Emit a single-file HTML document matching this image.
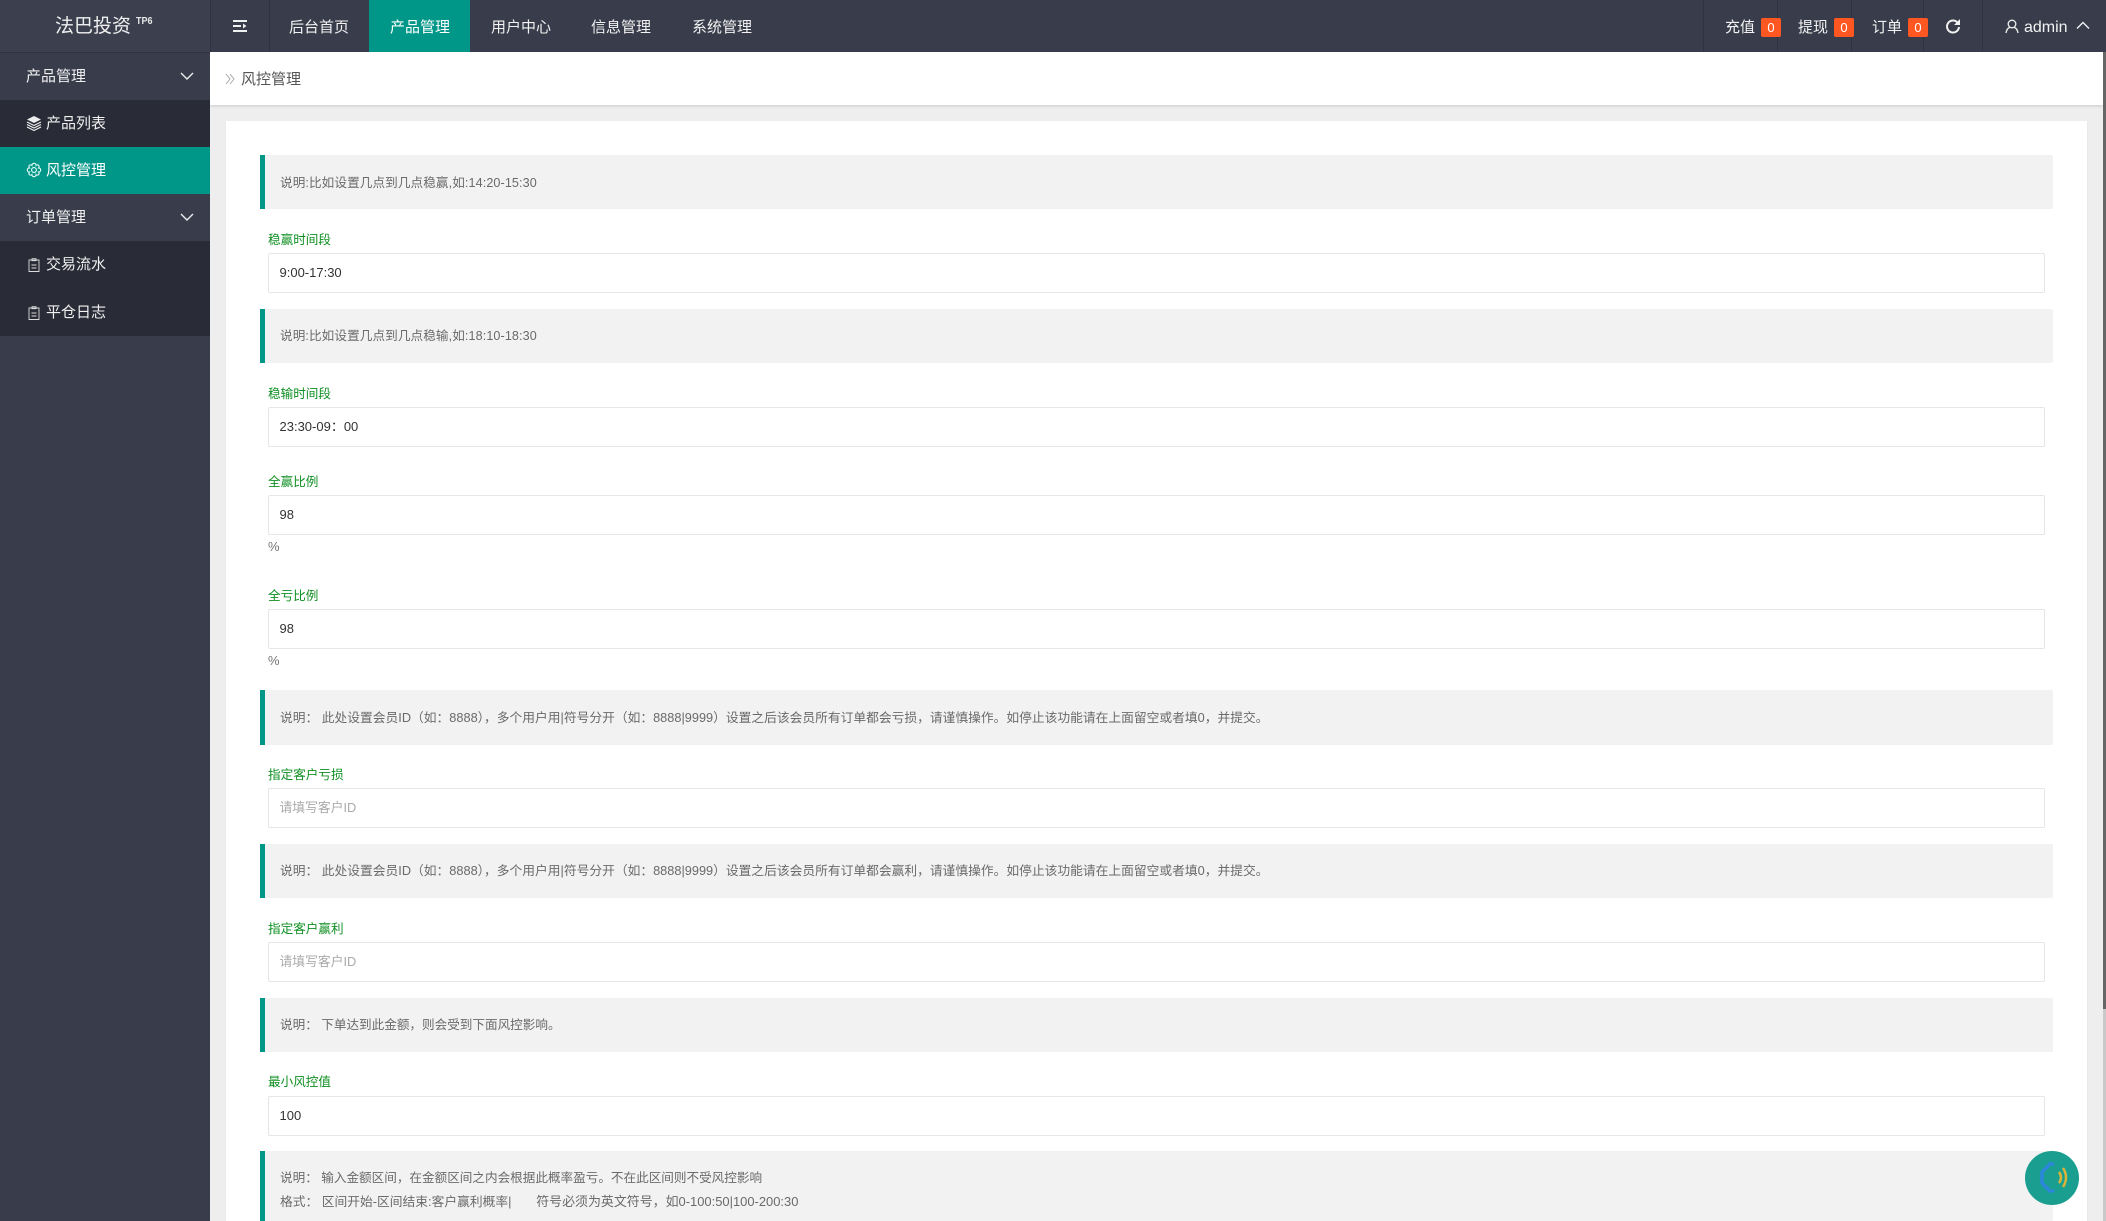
<!DOCTYPE html>
<html lang="zh-CN">
<head>
<meta charset="utf-8">
<title>风控管理</title>
<style>
*{box-sizing:border-box;margin:0;padding:0}
html,body{width:2106px;height:1221px;overflow:hidden;background:#eeeeee;font-family:"Liberation Sans","Noto Sans CJK SC",sans-serif;-webkit-font-smoothing:antialiased}
.a{position:absolute;white-space:pre}
#hd{left:0;top:0;width:2106px;height:52px;background:#393d4b}
.sep{position:absolute;top:0;width:1px;height:52px;background:#2f3340}
.nav{position:absolute;top:2px;height:50px;line-height:52px;color:#f2f2f2;font-size:15px}
.tab{position:absolute;left:369px;top:0;width:101px;height:52px;background:#009688}
.bd{position:absolute;top:18px;width:20px;height:19px;background:#ff5722;border-radius:2px;color:#fff;font-size:13px;line-height:19px;text-align:center}
#sb{left:0;top:52px;width:210px;height:1169px;background:#393d4b}
.si{position:absolute;left:0;width:210px;color:#f0f0f0;font-size:15px}
.st{position:absolute;left:26px;top:0;line-height:inherit}
.q{position:absolute;left:260px;width:1793px;background:#f2f2f2;border-left:5px solid #009688;border-radius:0 2px 2px 0;color:#6a6a6a;font-size:12.6px;padding-left:15px;white-space:pre}
.l{position:absolute;left:268px;height:18px;line-height:19px;font-size:12.6px;color:#0f8f22;white-space:pre}
.i{position:absolute;left:268px;width:1777px;height:40px;line-height:38px;border:1px solid #e6e6e6;background:#fff;border-radius:2px;padding-left:10.5px;font-size:13px;color:#333;white-space:pre}
.ph{color:#aaa;font-size:12.8px}
.p{position:absolute;left:268px;height:16px;line-height:16px;font-size:13px;color:#777}
svg{position:absolute;display:block;overflow:visible}
</style>
</head>
<body>
<div class="a" style="left:226px;top:52px;width:1877px;height:1169px;background:#eeeeee"></div>

<!-- breadcrumb -->
<div class="a" style="left:210px;top:52px;width:1893px;height:53px;background:#fff;box-shadow:0 1px 3px rgba(0,0,0,.15)"></div>
<svg style="left:225px;top:73px" width="11" height="12" viewBox="0 0 11 12" fill="none" stroke="#a8a8a8" stroke-width="1"><path d="M1 1l4 5-4 5M5 1l4 5-4 5"/></svg>
<div class="a" style="left:241px;top:70px;line-height:20px;font-size:15px;color:#555">风控管理</div>

<!-- card -->
<div class="a" style="left:226px;top:121px;width:1861px;height:1100px;background:#fff;box-shadow:0 1px 2px rgba(0,0,0,.05)"></div>

<div class="q" style="top:155px;height:54px;line-height:56px;letter-spacing:.1px">说明:比如设置几点到几点稳赢,如:14:20-15:30</div>
<div class="l" style="top:231px">稳赢时间段</div>
<div class="i" style="top:253px">9:00-17:30</div>

<div class="q" style="top:309px;height:54px;line-height:54px;letter-spacing:.1px">说明:比如设置几点到几点稳输,如:18:10-18:30</div>
<div class="l" style="top:385px">稳输时间段</div>
<div class="i" style="top:407px">23:30-09：00</div>

<div class="l" style="top:473px">全赢比例</div>
<div class="i" style="top:495px">98</div>
<div class="p" style="top:539px">%</div>

<div class="l" style="top:587px">全亏比例</div>
<div class="i" style="top:609px">98</div>
<div class="p" style="top:653px">%</div>

<div class="q" style="top:690px;height:55px;line-height:56px;font-size:12.75px">说明： 此处设置会员ID（如：8888），多个用户用|符号分开（如：8888|9999）设置之后该会员所有订单都会亏损，请谨慎操作。如停止该功能请在上面留空或者填0，并提交。</div>
<div class="l" style="top:766px">指定客户亏损</div>
<div class="i ph" style="top:788px">请填写客户ID</div>

<div class="q" style="top:844px;height:54px;line-height:54px;font-size:12.75px">说明： 此处设置会员ID（如：8888），多个用户用|符号分开（如：8888|9999）设置之后该会员所有订单都会赢利，请谨慎操作。如停止该功能请在上面留空或者填0，并提交。</div>
<div class="l" style="top:920px">指定客户赢利</div>
<div class="i ph" style="top:942px">请填写客户ID</div>

<div class="q" style="top:998px;height:54px;line-height:54px">说明： 下单达到此金额，则会受到下面风控影响。</div>
<div class="l" style="top:1073px">最小风控值</div>
<div class="i" style="top:1096px">100</div>

<div class="q" style="top:1151px;height:70px;line-height:23px;padding-top:16px">说明： 输入金额区间，在金额区间之内会根据此概率盈亏。不在此区间则不受风控影响
<span style="font-size:12.75px">格式： 区间开始-区间结束:客户赢利概率|       </span><span style="font-size:12.95px">符号必须为英文符号，如0-100:50|100-200:30</span></div>

<!-- scrollbar -->
<div class="a" style="left:2103px;top:52px;width:3px;height:957px;background:#666"></div>
<div class="a" style="left:2103px;top:1009px;width:3px;height:212px;background:#c9c9c9"></div>

<!-- sound button -->
<div class="a" style="left:2025px;top:1151px;width:54px;height:54px;border-radius:50%;background:#1a9e8f"></div>
<svg style="left:2025px;top:1151px" width="54" height="54" viewBox="0 0 54 54" fill="none">
<path d="M26 12L17 21v11l9 9" stroke="#2b86dc" stroke-width="3.5" stroke-linejoin="round"/><path d="M26 12l3 2M26 41l3-2" stroke="#2b86dc" stroke-width="3"/>
<path d="M34 21c2.500 3.500 2.500 7.500 0 11" stroke="#d9b43a" stroke-width="2.500"/><path d="M38 17c4 6 4 13 0 19" stroke="#d9b43a" stroke-width="2.500"/>
</svg>

<!-- header -->
<div id="hd" class="a">
  <div class="a" style="left:0;top:0;width:210px;height:52px;background:#3c404e"></div>
  <div class="a" style="left:55px;top:13px;line-height:28px;font-size:19px;color:#f0f0f0">法巴投资</div>
  <div class="a" style="left:136px;top:15px;line-height:14px;font-size:10px;font-weight:bold;color:#e8e8e8;transform:scaleX(.9);transform-origin:left">TP6</div>
  <div class="sep" style="left:210px"></div>
  <div class="sep" style="left:269px"></div>
  <svg style="left:232px;top:19px" width="16" height="14" viewBox="0 0 16 14" fill="#f0f0f0"><path d="M1 1h14v2H1zM1 6h8v2H1zM1 11h14v2H1z"/><path d="M11 4.500l3.500 2.500L11 9.500z"/></svg>
  <div class="tab"></div>
  <div class="nav" style="left:289px">后台首页</div>
  <div class="nav" style="left:390px;color:#fff">产品管理</div>
  <div class="nav" style="left:491px">用户中心</div>
  <div class="nav" style="left:591px">信息管理</div>
  <div class="nav" style="left:692px">系统管理</div>

  <div class="sep" style="left:1703px"></div>
  <div class="sep" style="left:1777px"></div>
  <div class="sep" style="left:1851px"></div>
  <div class="sep" style="left:1923px"></div>
  <div class="sep" style="left:1982px"></div>
  <div class="nav" style="left:1725px">充值</div><div class="bd" style="left:1761px">0</div>
  <div class="nav" style="left:1798px">提现</div><div class="bd" style="left:1834px">0</div>
  <div class="nav" style="left:1872px">订单</div><div class="bd" style="left:1908px">0</div>
  <svg style="left:1945px;top:18px" width="16" height="16" viewBox="0 0 16 16" fill="none"><path d="M12.500 4.500A6 6 0 1 0 14 9" stroke="#f2f2f2" stroke-width="2"/><path d="M15 1v6H9z" fill="#f2f2f2"/></svg>
  <svg style="left:2005px;top:19px" width="14" height="15" viewBox="0 0 14 15" fill="none" stroke="#f0f0f0" stroke-width="1.300"><circle cx="7" cy="5" r="3.800"/><path d="M1 14c.5-3.500 2.500-5.300 4-5.800M13 14c-.5-3.500-2.500-5.300-4-5.800"/></svg>
  <div class="nav" style="left:2024px;font-size:16px">admin</div>
  <svg style="left:2076px;top:21px" width="14" height="9" viewBox="0 0 14 9" fill="none" stroke="#f0f0f0" stroke-width="1.400"><path d="M1 7.500l6-6 6 6"/></svg>
</div>

<!-- sidebar -->
<div id="sb" class="a">
  <div class="a" style="left:0;top:0;width:210px;height:1px;background:#2f3340"></div>
  <div class="si" style="top:1px;height:47px;line-height:47px"><span class="st">产品管理</span>
    <svg style="left:180px;top:19px" width="14" height="9" viewBox="0 0 14 9" fill="none" stroke="#eee" stroke-width="1.400"><path d="M1 1l6 6 6-6"/></svg></div>
  <div class="si" style="top:48px;height:47px;line-height:47px;background:#292b36">
    <svg style="left:26px;top:15px" width="16" height="16" viewBox="0 0 16 16"><path d="M8 1l7 3.500-7 3.500-7-3.500z" fill="#eee"/><path d="M1 7l7 3.500L15 7M1 9.500L8 13l7-3.500M1 12l7 3.500 7-3.500" fill="none" stroke="#eee" stroke-width="1.200"/></svg>
    <span class="st" style="left:46px">产品列表</span></div>
  <div class="si" style="top:95px;height:47px;line-height:47px;background:#009688;color:#fff">
    <svg style="left:26px;top:15px" width="16" height="16" viewBox="0 0 16 16" fill="none" stroke="#eafff9" stroke-width="1.100"><circle cx="8" cy="8" r="2.400"/><path d="M10.100 3.400A1.700 1.700 0 0 1 12.600 5.900A1.700 1.700 0 0 1 12.600 10.100A1.700 1.700 0 0 1 10.100 12.600A1.700 1.700 0 0 1 5.900 12.600A1.700 1.700 0 0 1 3.400 10.100A1.700 1.700 0 0 1 3.400 5.900A1.700 1.700 0 0 1 5.900 3.400A1.700 1.700 0 0 1 10.100 3.400z"/></svg>
    <span class="st" style="left:46px">风控管理</span></div>
  <div class="si" style="top:142px;height:47px;line-height:47px"><span class="st">订单管理</span>
    <svg style="left:180px;top:19px" width="14" height="9" viewBox="0 0 14 9" fill="none" stroke="#eee" stroke-width="1.400"><path d="M1 1l6 6 6-6"/></svg></div>
  <div class="si" style="top:189px;height:95px;background:#292b36"></div>
  <div class="si" style="top:189px;height:47px;line-height:47px">
    <svg style="left:28px;top:17px" width="12" height="14" viewBox="0 0 12 14" fill="none" stroke="#dcdcdc" stroke-width=".9"><path d="M1 2h10v11.500H1zM4 .7h4v2H4zM3.500 7h5M3.500 10h5"/></svg>
    <span class="st" style="left:46px">交易流水</span></div>
  <div class="si" style="top:237px;height:47px;line-height:47px">
    <svg style="left:28px;top:17px" width="12" height="14" viewBox="0 0 12 14" fill="none" stroke="#dcdcdc" stroke-width=".9"><path d="M1 2h10v11.500H1zM4 .7h4v2H4zM3.500 7h5M3.500 10h5"/></svg>
    <span class="st" style="left:46px">平仓日志</span></div>
</div>
</body>
</html>
